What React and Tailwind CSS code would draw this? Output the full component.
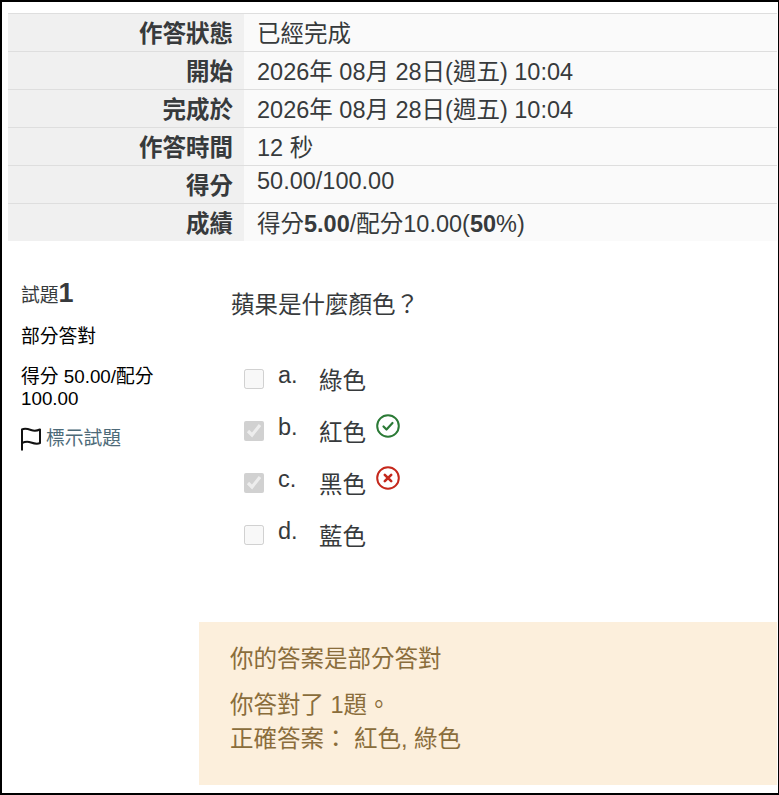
import React from 'react';

const fontStack = { fontFamily: '"Liberation Sans", "Noto Sans CJK TC", sans-serif' };

const rows = [
    { label: '作答狀態', value: '已經完成' },
    { label: '開始', value: '2026年 08月 28日(週五) 10:04' },
    { label: '完成於', value: '2026年 08月 28日(週五) 10:04' },
    { label: '作答時間', value: '12 秒' },
    { label: '得分', value: <span className="block -mt-[5px]">50.00/100.00</span> },
    { label: '成績', value: <>得分<b>5.00</b>/配分10.00(<b>50</b>%)</> },
];

const options = [
    { letter: 'a.', text: '綠色', checked: false },
    { letter: 'b.', text: '紅色', checked: true, mark: 'right' },
    { letter: 'c.', text: '黑色', checked: true, mark: 'wrong' },
    { letter: 'd.', text: '藍色', checked: false },
];

function RightIcon() {
    return (
        <svg viewBox="0 0 24 24" className="w-[24px] h-[24px] ml-[10px] -mt-[2px]" fill="none" stroke="#2b7a36" strokeWidth="2">
            <circle cx="12" cy="12" r="10.8" />
            <path d="M7.5 12.5l3 3 6-6.5" strokeWidth="2.2" strokeLinecap="round" strokeLinejoin="round" />
        </svg>
    );
}

function WrongIcon() {
    return (
        <svg viewBox="0 0 24 24" className="w-[24px] h-[24px] ml-[10px] -mt-[2px]" fill="none" stroke="#c5281c" strokeWidth="2">
            <circle cx="12" cy="12" r="10.8" />
            <path d="M8.8 8.8l6.4 6.4M15.2 8.8l-6.4 6.4" strokeWidth="2.6" strokeLinecap="round" />
        </svg>
    );
}

function FlagIcon() {
    return (
        <svg viewBox="0 0 22 24" className="w-[22px] h-[24px]" fill="none" stroke="#111" strokeWidth="2">
            <path d="M2 23.5V2.5c3-1.5 6-.5 9 .5s6 .8 9-.5v13.5c-3 1.5-6 .5-9-.5s-6-.8-9 .5" strokeLinejoin="round" />
        </svg>
    );
}

export default function App() {
    return (
        <div style={fontStack} className="w-[779px] h-[795px] bg-white border-2 border-black border-r-[1px] overflow-hidden text-[#373a3c]">
            {/* Summary table */}
            <div className="mt-[11px] ml-[6px] mr-[1px]">
                {rows.map((row) => (
                    <div key={row.label} className="flex h-[38px] border-t border-[#dedede]">
                        <div className="w-[236px] bg-[#f0f0f0] text-right pr-[11px] pt-[3px] font-bold text-[23.5px] leading-[34px]">{row.label}</div>
                        <div className="flex-1 bg-[#fafafa] pl-[13px] pt-[3px] text-[23.5px] leading-[34px]">{row.value}</div>
                    </div>
                ))}
            </div>

            <div className="flex mr-[1px]">
                {/* Question info */}
                <div className="w-[197px] pl-[19px] pt-[41px] shrink-0 text-[18.8px] leading-[22px]">
                    <div className="h-[31px] flex items-baseline">試題<b className="text-[27px]">1</b></div>
                    <div className="text-black mt-[13px]">部分答對</div>
                    <div className="text-black mt-[18px] w-[150px]">得分 50.00/配分 100.00</div>
                    <div className="flex items-center mt-[17px] -ml-[1px] text-[#4d6a78]">
                        <FlagIcon />
                        <span className="ml-[4px]">標示試題</span>
                    </div>
                </div>

                {/* Question body */}
                <div className="flex-1 min-w-0">
                    <div className="pl-[32px] pt-[50px] text-[23.5px] leading-[28px]">蘋果是什麼顏色？</div>
                    <div className="mt-[45px] pl-[45px]">
                        {options.map((o) => (
                            <div key={o.letter} className="flex items-start h-[52px]">
                                <input type="checkbox" disabled checked={o.checked} readOnly className="w-[20px] h-[20px] m-0 mt-[5px]" />
                                <span className="w-[41px] ml-[14px] text-[23.5px] leading-[28px] -mt-[3px]">{o.letter}</span>
                                <span className="text-[23.5px] leading-[28px] mt-[3px]">{o.text}</span>
                                {o.mark === 'right' && <RightIcon />}
                                {o.mark === 'wrong' && <WrongIcon />}
                            </div>
                        ))}
                    </div>
                    <div className="mt-[50px] h-[163px] bg-[#fcefdc] text-[#8a6d3b] pl-[31px] pt-[20px] text-[23.5px] leading-[35px]">
                        <div>你的答案是部分答對</div>
                        <div className="mt-[11px]">你答對了 1題。</div>
                        <div className="-mt-[1px]">正確答案： 紅色, 綠色</div>
                    </div>
                </div>
            </div>
        </div>
    );
}
